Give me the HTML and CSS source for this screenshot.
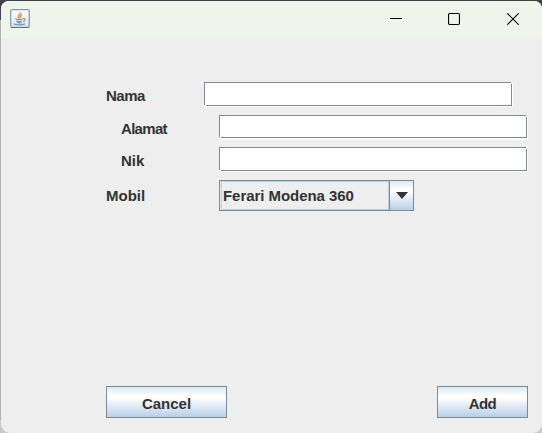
FILE: index.html
```
<!DOCTYPE html>
<html lang="id">
<head>
<meta charset="utf-8">
<title>Form</title>
<link rel="stylesheet" href="styles.css">
</head>
<body>
<div class="window">
  <header class="titlebar">
    <svg class="java" width="20" height="20" viewBox="0 0 20 20">
      <defs><linearGradient id="tile" x1="0" y1="0" x2="0" y2="1"><stop offset="0" stop-color="#fff"/><stop offset="1" stop-color="#dde1e5"/></linearGradient></defs>
      <rect x=".7" y=".7" width="18.6" height="17.8" rx="1.5" fill="url(#tile)" stroke="#7f98ab" stroke-width="1.2"/>
      <path d="M1 18.4H19" stroke="#587184" stroke-width="1"/>
      <path d="M10.7 3.2C11.2 5.2 7.2 6 8.3 8.2L9.4 9.6M11.8 5.6C9.2 6.7 10.1 7.8 10.5 9" fill="none" stroke="#ea9553" stroke-width="1.5"/>
      <path d="M5.2 9.8C7 10.8 11 10.7 12.8 9.9M6.2 11.7C8 12.6 10.5 12.5 12 11.8M6.8 13.3C8.5 14 10.5 13.9 11.6 13.4M13 9.6C16 9.2 15.4 12 12.9 12.5M3.6 14.7C5 16.4 13 16.2 15 14.8" fill="none" stroke="#7294ae" stroke-width="1.1"/>
    </svg>
    <div class="controls">
      <svg width="12" height="12" viewBox="0 0 12 12"><path d="M0 5.5H12"/></svg>
      <svg width="12" height="12" viewBox="0 0 12 12"><rect x=".55" y=".55" width="10.9" height="10.9" rx="1.2"/></svg>
      <svg class="close" width="12" height="12" viewBox="0 0 12 12"><path d="M.3 .3L11.7 11.7M11.7 .3L.3 11.7"/></svg>
    </div>
  </header>
  <main class="content">
    <div class="row"><label class="tight">Nama</label><div class="field"></div></div>
    <div class="row indent second"><label class="tighter">Alamat</label><div class="field short"></div></div>
    <div class="row indent third"><label>Nik</label><div class="field"></div></div>
    <div class="row select"><label>Mobil</label>
      <div class="combo"><span class="value">Ferari Modena 360</span><span class="arrow"><svg width="12" height="7" viewBox="0 0 12 7"><path d="M0 0H12L6 7Z"/></svg></span></div>
    </div>
    <div class="actions"><button class="cancel">Cancel</button><button class="add">Add</button></div>
  </main>
</div>
</body>
</html>
```
FILE: styles.css
```
* { box-sizing: border-box; }
body {
  margin: 0;
  width: 542px;
  height: 433px;
  overflow: hidden;
  padding-top: 1px;
  background: linear-gradient(#45414a 0 20px, #b0b0b0 20px 420px, #c9c9c9 420px);
  font: bold 15px "Liberation Sans", Arial, sans-serif;
  color: #333;
}
.window {
  height: 432px;
  margin-left: 1px;
  border-radius: 8px 8px 9px 9px;
  overflow: hidden;
  background: #eee;
}
.titlebar {
  height: 37px;
  padding: 8px 15px 0 9px;
  display: flex;
  justify-content: space-between;
  background: #eff5eb;
}
.controls {
  display: flex;
  gap: 46px;
  padding-top: 4px;
  margin-right: 8px;
}
.controls svg {
  fill: none;
  stroke: #000;
  stroke-width: 1.1;
}
.controls .close { margin-left: 1px; }
.content {
  padding: 44px 0 0 105px;
}
.row {
  display: flex;
  align-items: flex-start;
  height: 33px;
}
.indent { padding-left: 15px; }
.second { height: 32px; }
.row label {
  width: 98px;
  line-height: 28px;
}
.row .tight { letter-spacing: -.5px; }
.row .tighter { letter-spacing: -.7px; }
.field {
  width: 308px;
  height: 24px;
  border: 1px solid #7a8a99;
  background: #fff;
  box-shadow: 1px 1px 0 #fff;
  display: flex;
  justify-content: space-between;
}
.field::before,
.field::after {
  content: "";
  width: 1px;
  height: 1px;
  background: #eee;
}
.field::before {
  width: 2px;
  align-self: flex-end;
  margin: 0 0 -1px -1px;
}
.field::after {
  height: 2px;
  margin: -1px -1px 0 0;
}
.short { height: 23px; box-shadow: 1px 2px 0 #fff; }
.select { height: 31px; }
.select label {
  width: 113px;
  line-height: 32px;
}
.combo {
  display: flex;
  width: 195px;
  height: 31px;
  border: 1px solid #7a8a99;
}
.value {
  flex: 1;
  margin-left: 1px;
  padding-left: 1px;
  border: 1px solid #b8cfe5;
  line-height: 28px;
  letter-spacing: -.05px;
  white-space: nowrap;
}
.arrow {
  width: 25px;
  flex: none;
  margin-right: -1px;
  padding: 11px 0 0 6px;
  border: solid #7a8a99;
  border-width: 0 1px;
  background: linear-gradient(#dde8f3, #fff 30%, #fff 36%, #b8cfe5);
}
.arrow svg { display: block; fill: #333; }
.actions {
  display: flex;
  justify-content: space-between;
  width: 422px;
  margin-top: 175px;
}
.actions button {
  height: 32px;
  padding: 2px 0 0;
  border: 1px solid #7a8a99;
  background: linear-gradient(#dde8f3, #fff 30%, #fff 36%, #b8cfe5);
  color: #333;
  font: inherit;
}
.cancel { width: 121px; }
.add { width: 91px; letter-spacing: -.6px; }
```
